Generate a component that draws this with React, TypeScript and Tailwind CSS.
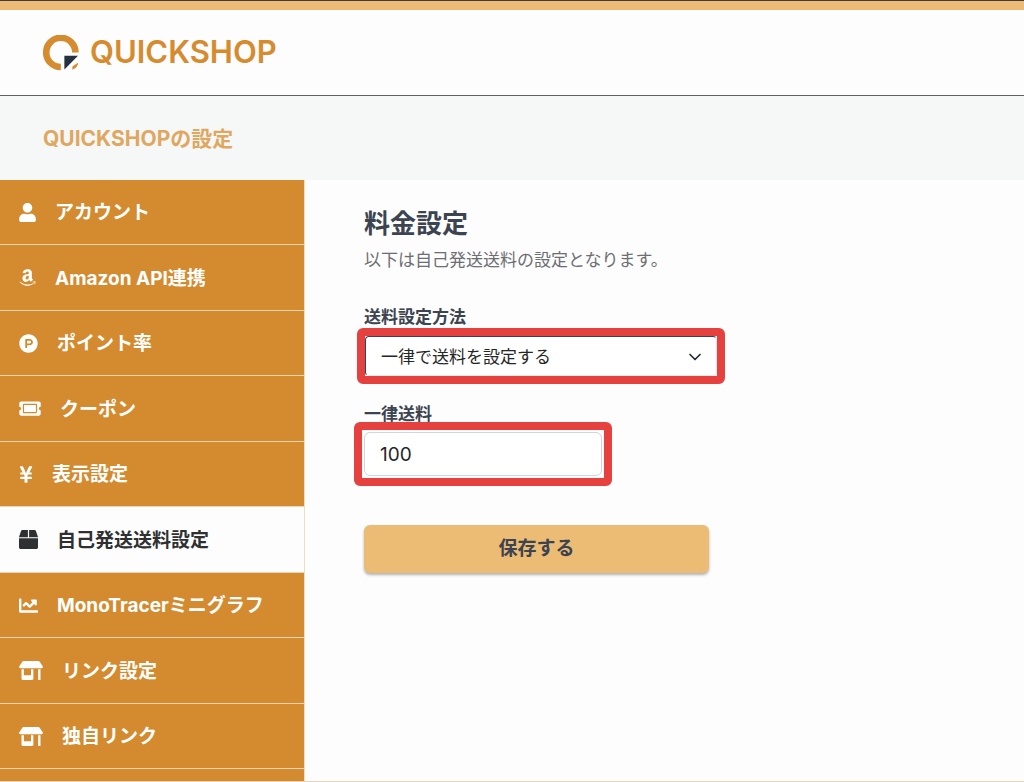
import {
  FaAmazon,
  FaBox,
  FaChartLine,
  FaProductHunt,
  FaStoreAlt,
  FaTicketAlt,
  FaUser,
  FaYenSign,
} from "react-icons/fa";
import { FiChevronDown } from "react-icons/fi";

const menuItems = [
  { icon: FaUser, size: "w-[17px]", label: "アカウント" },
  { icon: FaAmazon, size: "w-[17px]", label: "Amazon API連携" },
  { icon: FaProductHunt, size: "w-[19px]", label: "ポイント率" },
  { icon: FaTicketAlt, size: "w-[22px]", label: "クーポン" },
  { icon: FaYenSign, size: "w-[14px]", label: "表示設定" },
  { icon: FaBox, size: "w-[19px]", label: "自己発送送料設定", active: true },
  { icon: FaChartLine, size: "w-[19px]", label: "MonoTracerミニグラフ" },
  { icon: FaStoreAlt, size: "w-[24px]", label: "リンク設定" },
  { icon: FaStoreAlt, size: "w-[24px]", label: "独自リンク" },
];

function Logo() {
  return (
    <svg viewBox="0 0 36 36" className="h-9 w-9" aria-hidden="true">
      <path
        d="M32.4 17.4A14.6 14.6 0 1 0 17.8 32"
        fill="none"
        stroke="#d68c2e"
        strokeWidth="6.6"
      />
      <path d="M21.4 20.8H35L21.4 34.6Z" fill="#26313f" />
      <path d="M35.2 27.6C34.8 31 33 33.6 29.4 34.8V31.4Z" fill="#d68c2e" />
    </svg>
  );
}

export default function App() {
  return (
    <div className="bg-[#fdfdfd] font-['Inter','Noto_Sans_CJK_JP',sans-serif] text-[#3b4450]">
      <header className="border-t border-b border-t-[#3f3a42] border-b-[#5f6264]">
        <div className="h-[9px] bg-[#eebb76]" />
        <div className="flex h-[85px] items-center gap-[11px] px-[43px]">
          <Logo />
          <span className="text-[31px] font-semibold text-[#d68c2e]">
            QUICKSHOP
          </span>
        </div>
      </header>

      <div className="flex h-[84px] items-center bg-[#f6f8f8] px-[43px]">
        <h1 className="pt-0.5 text-[21px] font-bold text-[#dfa75f]">
          QUICKSHOPの設定
        </h1>
      </div>

      <div className="flex border-b border-[#e8d3b8]">
        <nav className="w-[305px] shrink-0 border-r border-[#efdcc3] bg-[#d48b2f]">
          {menuItems.map(({ icon: Icon, size, label, active }) => (
            <a
              key={label}
              href="#"
              className={`flex h-[65px] items-center gap-[19px] border-b border-[#ebd3b4] pl-[19px] text-[19px] font-bold even:h-[66px] ${
                active ? "bg-[#fdfdfd] text-[#2f3032]" : "text-white"
              }`}
            >
              <Icon className={`h-[19px] ${size}`} />
              <span className="pt-[3px]">{label}</span>
            </a>
          ))}
          <div className="h-3" />
        </nav>

        <main className="flex-1 px-[59px] pt-6">
          <h2 className="text-[26px] leading-10 font-bold">料金設定</h2>
          <p className="text-[17px] leading-8 text-[#6c6e72]">
            以下は自己発送送料の設定となります。
          </p>

          <form className="mt-[25px]">
            <label
              htmlFor="method"
              className="block text-[17px] leading-8 font-bold"
            >
              送料設定方法
            </label>
            <div className="relative mt-[3px] ml-px w-[352px]">
              <select
                id="method"
                className="block h-10 w-full appearance-none rounded border border-gray-200 border-t-gray-700 border-l-gray-700 bg-white px-[15px] pt-[3px] text-[17px] text-[#262626]"
              >
                <option>一律で送料を設定する</option>
              </select>
              <FiChevronDown className="pointer-events-none absolute top-[11px] right-3 h-5 w-5 text-gray-800" />
              <div className="pointer-events-none absolute -inset-2 rounded-md border-8 border-[#e5423f]" />
            </div>

            <label
              htmlFor="fee"
              className="mt-[22px] block text-[17px] leading-8 font-bold"
            >
              一律送料
            </label>
            <div className="relative mt-0.5 w-[238px]">
              <input
                id="fee"
                type="text"
                defaultValue="100"
                className="block h-11 w-full rounded-md border border-gray-300 bg-white px-[15px] text-[19px] text-[#262626]"
              />
              <div className="pointer-events-none absolute -inset-2.5 rounded-md border-8 border-[#e5423f]" />
            </div>

            <button
              type="button"
              className="mt-[49px] h-12 w-[345px] rounded-md bg-[#ecbb74] text-[19px] font-bold shadow-[0_2px_3px_rgba(0,0,0,0.3)]"
            >
              保存する
            </button>
          </form>
        </main>
      </div>
    </div>
  );
}
